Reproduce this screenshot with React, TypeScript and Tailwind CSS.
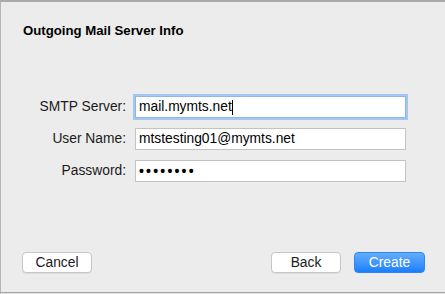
import React from 'react'

const font = { fontFamily: '"Liberation Sans", Arial, sans-serif' }

function Field({ label, children, focused }: { label: string; children: React.ReactNode; focused?: boolean }) {
  return (
    <div className="flex items-center h-[22px]">
      <label className="w-[126px] pr-[1px] text-right text-[13.8px] text-[#1a1a1a]">{label}</label>
      <div
        className={
          'ml-[8px] w-[271px] h-[22px] bg-white flex items-center pl-[3px] text-[13.8px] text-black ' +
          (focused
            ? 'border border-[#8fb5ea] shadow-[0_0_0_2px_#a4c6f3]'
            : 'border border-[#c3c3c3]')
        }
      >
        {children}
      </div>
    </div>
  )
}

function Button({ children, primary }: { children: React.ReactNode; primary?: boolean }) {
  return (
    <button
      className={
        'h-[21px] rounded-[4px] text-[13.8px] leading-none flex items-center justify-center ' +
        (primary
          ? 'w-[71px] bg-gradient-to-b from-[#63adfb] to-[#197ffb] text-white border border-[#2e86f6]'
          : 'w-[70px] bg-white text-[#1a1a1a] border border-[#c6c6c6] shadow-[0_1px_0_rgba(0,0,0,0.06)]')
      }
    >
      {children}
    </button>
  )
}

export default function App() {
  return (
    <div
      style={font}
      className="w-[445px] h-[294px] bg-[#ececec] border-t-2 border-t-[#a9a9a9] border-l border-l-[#b4b4b4] flex flex-col"
    >
      <div className="flex-1 flex flex-col border-b border-b-[#a3a3a3]">
        <h1 className="pl-[22px] pt-[21px] text-[13.2px] leading-4 font-bold text-black">
          Outgoing Mail Server Info
        </h1>

        <div className="mt-[57px] flex flex-col gap-[10px]">
          <Field label="SMTP Server:" focused>
            <span>mail.mymts.net</span>
            <span className="inline-block w-px h-[15px] bg-black" />
          </Field>
          <Field label="User Name:">
            <span>mtstesting01@mymts.net</span>
          </Field>
          <Field label="Password:">
            <span className="tracking-[2.2px] text-[14px] font-bold">••••••••</span>
          </Field>
        </div>

        <div className="mt-auto mb-[19px] flex items-center pl-[21px] pr-[20px]">
          <Button>Cancel</Button>
          <div className="flex-1" />
          <Button>Back</Button>
          <div className="w-[13px]" />
          <Button primary>Create</Button>
        </div>
      </div>
      <div className="h-px bg-[#e4e4e4]" />
    </div>
  )
}
